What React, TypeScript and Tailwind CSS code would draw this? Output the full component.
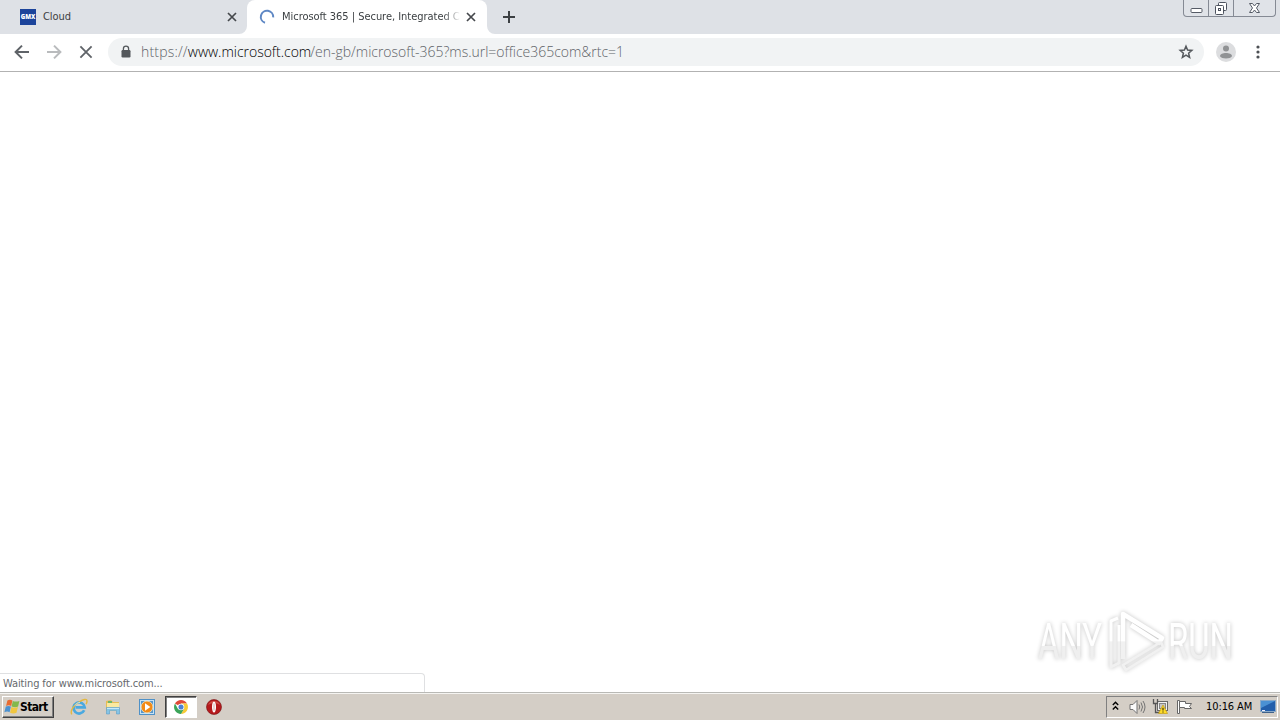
import type { ReactNode } from 'react';

const ICON_STROKE = '#5f6368';

function CloseIcon({ size = 10, color = '#45484c', width = 1.7 }: { size?: number; color?: string; width?: number }) {
  return (
    <svg width={size} height={size} viewBox="0 0 10 10" stroke={color} strokeWidth={width} fill="none">
      <path d="M1 1l8 8M9 1L1 9" />
    </svg>
  );
}

function WindowControls() {
  return (
    <div className="flex h-[17px] w-[93px] rounded-b-[4px] border border-t-0 border-[#858a94] bg-[#e0e3e8]">
      <div className="flex w-[25px] justify-center border-r border-[#858a94]">
        <svg width="13" height="16" viewBox="0 0 13 16">
          <rect x="1" y="8.5" width="11" height="4" rx="1" fill="#fff" stroke="#555b66" />
        </svg>
      </div>
      <div className="flex w-[25px] justify-center border-r border-[#858a94]">
        <svg width="14" height="16" viewBox="0 0 14 16" fill="#fff" stroke="#4c525e">
          <rect x="4.5" y="2.5" width="8" height="8" rx="1" />
          <rect x="1.5" y="5.5" width="8" height="9" rx="1" />
          <rect x="4.5" y="8.5" width="2" height="2" />
        </svg>
      </div>
      <div className="flex flex-1 justify-center">
        <svg width="13" height="16" viewBox="0 0 13 16" fill="#fff" stroke="#555b66">
          <path d="M1.5 3.5h3l2 2.5 2-2.5h3L8.5 8l3 4.5h-3l-2-2.5-2 2.5h-3l3-4.5z" />
        </svg>
      </div>
    </div>
  );
}

function TabStrip() {
  return (
    <div className="relative flex h-[34px] bg-[#dee1e6]">
      {/* Inactive tab */}
      <div className="flex w-[247px] items-center pl-5 pr-[10px]">
        <svg width="16" height="16" viewBox="0 0 16 16">
          <rect width="16" height="16" fill="#1c449b" />
          <text x="0.7" y="10.4" fontFamily="Open Sans, sans-serif" fontWeight="800" fontSize="6.6" textLength="14.6" lengthAdjust="spacingAndGlyphs" fill="#fff">GMX</text>
        </svg>
        <span className="ml-[7px] flex-1 text-[11px] tracking-[-0.08px] text-[#3c4043]">Cloud</span>
        <CloseIcon />
      </div>

      {/* Active tab */}
      <div className="relative flex w-60 items-center rounded-t-[8px] bg-white pl-3 pr-[11px]">
        <svg className="absolute bottom-0 -left-2" width="8" height="8" viewBox="0 0 8 8"><path d="M8 0v8H0a8 8 0 0 0 8-8" fill="#fff" /></svg>
        <svg className="absolute -right-2 bottom-0" width="8" height="8" viewBox="0 0 8 8"><path d="M0 0v8h8a8 8 0 0 1-8-8" fill="#fff" /></svg>
        <svg width="16" height="16" viewBox="0 0 16 16" fill="none">
          <path d="M6 13.8A6.2 6.2 0 1 1 14.2 8.4" stroke="#5e87c4" strokeWidth="2" />
        </svg>
        <span className="ml-[7px] w-[179px] whitespace-nowrap text-[11px] tracking-[-0.03px] text-[#3c4043] [mask-image:linear-gradient(to_right,black_90%,transparent)]">
          Microsoft 365 | Secure, Integrated C
        </span>
        <span className="ml-auto"><CloseIcon /></span>
      </div>

      <svg className="mt-[10px] ml-[15px]" width="14" height="14" viewBox="0 0 14 14" stroke="#3c4043" strokeWidth="2">
        <path d="M7 1v12M1 7h12" />
      </svg>
      <div className="mr-[4px] ml-auto"><WindowControls /></div>
    </div>
  );
}

function Toolbar() {
  return (
    <div className="flex h-[38px] items-center border-b border-[#b2b2b2] bg-white pb-px">
      <div className="flex w-[108px] items-center pl-[14px]">
        <svg width="16" height="16" viewBox="0 0 16 16" fill="none" stroke={ICON_STROKE} strokeWidth="2">
          <path d="M15 8H2.2M8 1.6L1.6 8 8 14.4" />
        </svg>
        <svg className="ml-4" width="16" height="16" viewBox="0 0 16 16" fill="none" stroke="#b9bbbd" strokeWidth="2">
          <path d="M1 8h12.8M8 1.6L14.4 8 8 14.4" />
        </svg>
        <span className="ml-[17px]"><CloseIcon size={14} color={ICON_STROKE} width={1.3} /></span>
      </div>
      <div className="flex h-7 w-[1096px] items-center rounded-full bg-[#f1f3f4] pl-[13px] pr-[10px]">
        <svg width="10" height="14" viewBox="0 0 10 14">
          <rect x=".5" y="5" width="9" height="7.5" rx="1.2" fill="#54585c" />
          <path d="M2.4 5.5V3.7a2.6 2.6 0 0 1 5.2 0v1.8" fill="none" stroke="#54585c" strokeWidth="1.3" />
        </svg>
        <span className="ml-[10px] flex flex-1 whitespace-nowrap pb-px font-['Open_Sans',sans-serif] text-[14px] font-light text-[#5f6368]">
          <span className="tracking-[0.18px]">https://</span>
          <span className="w-[122.5px] tracking-[-0.02px] text-black">www.microsoft.com</span>
          <span className="tracking-[-0.02px]">/en-gb/microsoft-365?ms.url=office365com&amp;rtc=1</span>
        </span>
        <svg width="16" height="16" viewBox="0 0 16 16" fill="none" stroke="#54585c" strokeWidth="1.5">
          <path d="M8 2.2l1.6 3.9 4.2.3-3.2 2.8 1 4.1L8 11.1l-3.6 2.2 1-4.1-3.2-2.8 4.2-.3z" />
        </svg>
      </div>
      <svg className="ml-3" width="20" height="20" viewBox="0 0 20 20">
        <circle cx="10" cy="10" r="10" fill="#dcdddf" />
        <circle cx="10" cy="6.5" r="3" fill="#909294" />
        <path d="M4 14.3c0-2.3 3-3.3 6-3.3s6 1 6 3.3c-1 1.4-3.2 2.2-6 2.2s-5-.8-6-2.2" fill="#909294" />
      </svg>
      <svg className="ml-5" width="4" height="14" viewBox="0 0 4 14" fill="#4d5054">
        <circle cx="2" cy="2" r="1.6" /><circle cx="2" cy="7" r="1.6" /><circle cx="2" cy="12" r="1.6" />
      </svg>
    </div>
  );
}

function Watermark() {
  return (
    <svg className="absolute right-[34px] bottom-[16px] overflow-visible drop-shadow-[0_0_2px_rgba(0,0,0,0.24)]" width="216" height="68" viewBox="0 0 216 68">
      <defs>
        <linearGradient id="glyph" x1="0" y1="0" x2="0" y2="1">
          <stop offset="0.56" stopColor="#ffffff" />
          <stop offset="0.57" stopColor="#efefef" />
        </linearGradient>
        <linearGradient id="play" gradientUnits="userSpaceOnUse" x1="0" y1="0" x2="0" y2="68">
          <stop offset="0.48" stopColor="#ffffff" />
          <stop offset="0.5" stopColor="#f1f1f1" />
        </linearGradient>
      </defs>
      <g fontFamily="Roboto, sans-serif" fontSize="50" fill="url(#glyph)">
        <text x="8" y="51" textLength="64" lengthAdjust="spacingAndGlyphs">ANY</text>
        <text x="138" y="51" textLength="65" lengthAdjust="spacingAndGlyphs">RUN</text>
      </g>
      <g fill="none" stroke="url(#play)" strokeWidth="4.5" strokeLinejoin="round">
        <path d="M93 51V6l39 24-3 5-28-18" />
        <path d="M88 10l-7 3v46l8-4V17" strokeWidth="3" />
        <path d="M131 34L93 57l3 5 37-23z" strokeWidth="2.5" />
      </g>
    </svg>
  );
}

function IeIcon() {
  return (
    <svg width="18" height="18" viewBox="0 0 18 18" fill="none">
      <path d="M14.2 12.3a5.6 5.6 0 1 1 .5-2.9H5.5" stroke="#4aa9e0" strokeWidth="2.7" />
      <path d="M1.8 16.3C-.5 12.5 4.7 6.5 9 4c4-2.5 8-4 8-.8 0 1-.4 2-.9 3" stroke="#e4b83f" strokeWidth="1.4" />
      <path d="M5 7.5Q7 4 10 4.5" stroke="#b4e2f5" strokeWidth="1" />
    </svg>
  );
}

function ExplorerIcon() {
  return (
    <svg width="18" height="18" viewBox="0 0 18 18">
      <path d="M2 3l5-1 2 2h6v9H2z" fill="#e5bd55" />
      <path d="M3 5h12v8H3z" fill="#fae9a0" />
      <path d="M4 3h4v2H4z" fill="#6eb56b" />
      <path d="M2.5 16V9.5h13V16h-3v-3.5h-7V16z" fill="#85c4e6" stroke="#5ba0c9" strokeWidth=".6" />
      <path d="M3 10.5h12" stroke="#c6e8f9" />
    </svg>
  );
}

function MediaIcon() {
  return (
    <svg width="16" height="16" viewBox="0 0 16 16">
      <rect x=".5" y=".5" width="15" height="15" fill="#c6e2f4" stroke="#4f91c7" />
      <rect x="2" y="2" width="12" height="12" fill="#5796cb" />
      <circle cx="8" cy="8" r="5.9" fill="#f28a16" stroke="#fff0cd" strokeWidth=".7" />
      <path d="M6 4.2v7.6L11.4 8z" fill="#fff" />
    </svg>
  );
}

function ChromeIcon() {
  return (
    <svg width="14" height="14" viewBox="0 0 16 16">
      <path d="M8 8L1.1 4A8 8 0 0 1 14.9 4H8z" fill="#df4938" />
      <path d="M8 8l6.9-4A8 8 0 0 1 8 16l3.5-6z" fill="#f7ca36" />
      <path d="M8 8l3.5 2L8 16A8 8 0 0 1 1.1 4l3.4 6z" fill="#3ba459" />
      <path d="M8 4h6.9l-3 5z" fill="#f7ca36" />
      <circle cx="8" cy="8" r="3.8" fill="#fff" />
      <circle cx="8" cy="8" r="2.9" fill="#4b80d4" />
    </svg>
  );
}

function OperaIcon() {
  return (
    <svg width="16" height="16" viewBox="0 0 16 16">
      <circle cx="8" cy="8" r="7.5" fill="#b51a1d" stroke="#761113" strokeWidth=".6" />
      <path d="M2 6a6.5 6.5 0 0 1 12 0Q8 2 2 6" fill="#cf4d47" />
      <ellipse cx="8" cy="8" rx="2" ry="5.6" fill="#fff" />
      <ellipse cx="8" cy="8" rx=".4" ry="4" fill="#c98a8a" />
    </svg>
  );
}

function LaunchItem({ children }: { children: ReactNode }) {
  return <div className="flex h-[22px] w-[34px] items-center justify-center">{children}</div>;
}

function Tray() {
  return (
    <div className="mr-[2px] ml-auto flex h-[22px] w-[172px] items-center border border-t-[#808080] border-r-white border-b-white border-l-[#808080] pl-[5px]">
      <svg className="mb-[2px]" width="7" height="10" viewBox="0 0 7 10" fill="none" stroke="#000" strokeWidth="1.4">
        <path d="M.8 4l2.7-2.7L6.2 4M.8 8.5l2.7-2.7 2.7 2.7" />
      </svg>
      <svg className="ml-[10px]" width="17" height="16" viewBox="0 0 17 16" stroke="#737373" fill="none">
        <path d="M1 5.5h3l4-4v13l-4-4H1z" fill="#fafafa" />
        <path d="M10 5.5q1.5 2.5 0 5M12 3.5q3 4.5 0 9M14 2q4 6 0 12" />
      </svg>
      <svg className="ml-[6px]" width="17" height="17" viewBox="0 0 17 17">
        <rect x="5.5" y="3.5" width="10" height="9" fill="#f2f2f2" stroke="#686868" />
        <rect x="7.5" y="5.5" width="6" height="5" fill="#c6c6c6" stroke="#858585" />
        <path d="M1.5 1v4.5h4V1M3.5 5.5v9h5" fill="none" stroke="#555" strokeWidth="1.3" />
        <path d="M11 7l4.5 8.5h-9z" fill="#ffdc27" stroke="#c79f14" strokeWidth=".7" />
        <path d="M11 9.8v2.8M11 13.5v1" stroke="#3e3510" strokeWidth="1.2" />
      </svg>
      <svg className="ml-[7px]" width="17" height="16" viewBox="0 0 17 16" stroke="#666" fill="#fff">
        <path d="M1.5 1.5h2v13h-2z" />
        <path d="M3.5 2.5h6v2h6l-2 3 2 2h-7v-1h-5z" />
      </svg>
      <span className="mt-[2px] ml-[13px] text-[11px] tracking-[-0.1px] whitespace-nowrap text-black">10:16 AM</span>
      <svg className="mr-[1px] ml-auto" width="16" height="14" viewBox="0 0 16 14">
        <rect x=".5" y=".5" width="15" height="11" fill="#235fab" stroke="#8baac8" />
        <path d="M1 1h14L1 8z" fill="#4b91d3" />
        <path d="M2 12.5h12" stroke="#40628b" />
        <path d="M2 10.5h3" stroke="#eef" />
      </svg>
    </div>
  );
}

function Taskbar() {
  return (
    <div className="flex h-7 items-center border-t border-[#b9b9b5] bg-[#d4cec6] shadow-[inset_0_1px_0_#f5f4f1]">
      <button className="mt-px ml-[2px] flex h-[22px] w-[52px] items-center border border-t-white border-r-[#404040] border-b-[#404040] border-l-white pl-px shadow-[inset_-1px_-1px_0_#808080]">
        <svg width="16" height="16" viewBox="0 0 16 16">
          <path d="M3.4 1.5q2.5-1.5 5 0L7.2 7Q4.8 5.7 2.1 7z" fill="#e86b31" />
          <path d="M8.8 1.9q3 1.4 6.6 0L14.1 7.5q-2.8 1.4-6.5 0z" fill="#83b84b" />
          <path d="M1.8 7.6q2.8-1.4 5.1 0l-1.3 5.6Q3.2 12 .4 13.2z" fill="#4b91d0" />
          <path d="M7.4 8.1q2.8 1.4 6.5 0l-1.4 5.6q-3 1.5-6.4 0z" fill="#f1c640" />
        </svg>
        <span className="text-[12px] font-bold tracking-[-0.65px] text-black">Start</span>
      </button>
      <div className="mt-px ml-2 flex">
        <LaunchItem><IeIcon /></LaunchItem>
        <LaunchItem><ExplorerIcon /></LaunchItem>
        <LaunchItem><MediaIcon /></LaunchItem>
        <div className="ml-px flex h-[22px] w-[32px] items-center justify-center border border-t-[#404040] border-r-white border-b-white border-l-[#404040] bg-white shadow-[inset_1px_1px_0_#808080]">
          <ChromeIcon />
        </div>
        <LaunchItem><OperaIcon /></LaunchItem>
      </div>
      <Tray />
    </div>
  );
}

export default function App() {
  return (
    <div className="flex h-[720px] w-[1280px] flex-col overflow-hidden bg-white font-['DejaVu_Sans_Condensed','DejaVu_Sans',sans-serif]">
      <TabStrip />
      <Toolbar />
      <main className="relative flex-1 bg-white">
        <Watermark />
        <div className="absolute bottom-0 left-0 flex h-[19px] w-[425px] items-center rounded-tr-[4px] border-t border-r border-[#dfe0e2] bg-white pt-[2px] pl-[3px] text-[11px] tracking-[-0.11px] text-[#66696d]">
          Waiting for www.microsoft.com...
        </div>
      </main>
      <Taskbar />
    </div>
  );
}
